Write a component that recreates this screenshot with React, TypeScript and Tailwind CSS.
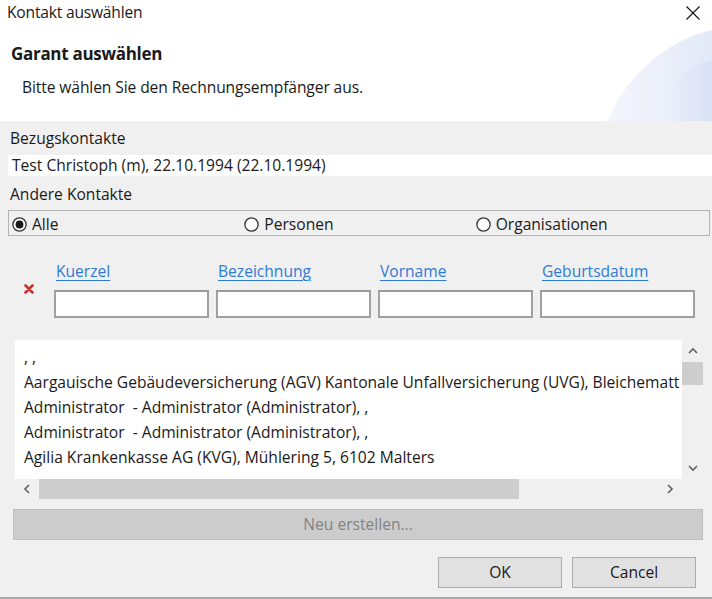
import React from "react";

const Radio = ({ checked, label }: { checked?: boolean; label: string }) => (
  <div className="flex items-center gap-[5px]">
    <svg width="15" height="15" viewBox="0 0 15 15">
      <circle cx="7.5" cy="7.5" r="6.6" fill="white" stroke="#333" strokeWidth="1.3" />
      {checked && <circle cx="7.5" cy="7.5" r="3.9" fill="#1a1a1a" />}
    </svg>
    <span>{label}</span>
  </div>
);

const Chevron = ({ dir }: { dir: "up" | "down" | "left" | "right" }) => {
  const paths: Record<string, string> = {
    up: "M1 6 L5 2 L9 6",
    down: "M1 2 L5 6 L9 2",
    left: "M6 1 L2 5 L6 9",
    right: "M2 1 L6 5 L2 9",
  };
  const vert = dir === "up" || dir === "down";
  return (
    <svg width={vert ? 10 : 8} height={vert ? 8 : 10} viewBox={vert ? "0 0 10 8" : "0 0 8 10"}>
      <path d={paths[dir]} fill="none" stroke="#606060" strokeWidth="1.6" />
    </svg>
  );
};

export default function App() {
  const filters = ["Kuerzel", "Bezeichnung", "Vorname", "Geburtsdatum"];
  const items = [
    ", ,",
    "Aargauische Gebäudeversicherung (AGV) Kantonale Unfallversicherung (UVG), Bleichematt",
    "Administrator  - Administrator (Administrator), ,",
    "Administrator  - Administrator (Administrator), ,",
    "Agilia Krankenkasse AG (KVG), Mühlering 5, 6102 Malters",
  ];
  return (
    <div className="w-[712px] h-[599px] overflow-hidden bg-[#f0f0f0] flex flex-col font-['Open_Sans',sans-serif] text-[15.6px] text-[#1a1a1a]">
      {/* Header (white) */}
      <div className="relative bg-white h-[121px] shrink-0">
        <svg className="absolute right-0 top-0" width="110" height="121" viewBox="0 0 110 121">
          <defs>
            <linearGradient id="g1" x1="0" y1="0" x2="1" y2="0">
              <stop offset="0" stopColor="#f4f6fc" />
              <stop offset="1" stopColor="#e3e9f8" />
            </linearGradient>
            <linearGradient id="g2" x1="0" y1="0" x2="1" y2="0">
              <stop offset="0" stopColor="#eef2fb" />
              <stop offset="1" stopColor="#d9e1f5" />
            </linearGradient>
          </defs>
          <path d="M5 121 C 25 75, 65 40, 110 30 L110 121 Z" fill="url(#g1)" />
          <path d="M52 121 C 60 90, 80 66, 110 60 L110 121 Z" fill="url(#g2)" />
        </svg>
        <div className="relative h-[26px] flex items-center justify-between pl-[7px] pr-[12px]">
          <span className="tracking-[-0.2px]">Kontakt auswählen</span>
          <svg width="14" height="14" viewBox="0 0 14 14">
            <path d="M0.5 0.5 L13.5 13.5 M13.5 0.5 L0.5 13.5" stroke="#111" strokeWidth="1.1" />
          </svg>
        </div>
        <div className="relative pl-[11px] pt-[17px] text-[17px] font-bold leading-[22px] tracking-[-0.3px]">
          Garant auswählen
        </div>
        <div className="relative pl-[22px] mt-[11px] leading-[22px] tracking-[-0.1px]">
          Bitte wählen Sie den Rechnungsempfänger aus.
        </div>
      </div>

      {/* Body */}
      <div className="flex flex-col pt-[7px] pl-[8px]">
        <div className="h-[20px] leading-[20px] pl-[2px]">Bezugskontakte</div>
        <div className="mt-[7px] h-[21px] bg-white leading-[21px] pl-[4px]">
          Test Christoph (m), 22.10.1994 (22.10.1994)
        </div>
        <div className="mt-[8px] h-[20px] leading-[20px] pl-[2px]">Andere Kontakte</div>
        <div className="mt-[6px] mr-[2px] h-[26px] pt-[2px] border border-[#b4b4b4] grid grid-cols-3 items-center">
          <div className="pl-[3px]">
            <Radio checked label="Alle" />
          </div>
          <div className="pl-[2px]">
            <Radio label="Personen" />
          </div>
          <div className="pl-[0px]">
            <Radio label="Organisationen" />
          </div>
        </div>

        {/* Filters */}
        <div className="mt-[25px] flex">
          <div className="w-[46px] flex flex-col">
            <div className="h-[20px]" />
            <div className="mt-[3px] h-[28px] pl-[16px]">
              <svg width="10" height="10" viewBox="0 0 10 10">
                <path d="M1.5 1.5 L8.5 8.5 M8.5 1.5 L1.5 8.5" stroke="#c9302c" strokeWidth="2.6" strokeLinecap="round" />
              </svg>
            </div>
          </div>
          <div className="flex gap-[7px]">
            {filters.map((f) => (
              <div key={f} className="w-[155px] flex flex-col">
                <div className="h-[20px] leading-[20px] pl-[2px]">
                  <span className="text-[#2e7bd6] underline decoration-[#2e7bd6] underline-offset-[3px]">{f}</span>
                </div>
                <div className="mt-[9px] h-[28px] bg-white border-2 border-[#a0a0a0] border-t-[#9a9a9a]" />
              </div>
            ))}
          </div>
        </div>
      </div>

      {/* List */}
      <div className="mt-[22px] ml-[15px] mr-[9px] flex flex-col">
        <div className="flex h-[139px]">
          <div className="flex-1 bg-white overflow-hidden pl-[9px] pt-[5px] pr-0">
            {items.map((t, i) => (
              <div key={i} className="h-[25px] leading-[25px] whitespace-pre">{t}</div>
            ))}
          </div>
          <div className="w-[21px] bg-[#f0f0f0] flex flex-col items-center">
            <div className="h-[22px] flex items-center justify-center">
              <Chevron dir="up" />
            </div>
            <div className="w-[21px] h-[23px] bg-[#cdcdcd]" />
            <div className="flex-1" />
            <div className="h-[22px] flex items-center justify-center">
              <Chevron dir="down" />
            </div>
          </div>
        </div>
        <div className="flex h-[20px] items-center mr-[21px]">
          <div className="w-[24px] flex items-center justify-center">
            <Chevron dir="left" />
          </div>
          <div className="w-[480px] h-[20px] bg-[#cdcdcd]" />
          <div className="flex-1" />
          <div className="w-[24px] flex items-center justify-center">
            <Chevron dir="right" />
          </div>
        </div>
      </div>

      {/* Neu erstellen */}
      <div className="mt-[10px] ml-[13px] mr-[9px] h-[31px] bg-[#cccccc] border border-[#bfbfbf] flex items-center justify-center text-[#838383]">
        Neu erstellen...
      </div>

      {/* OK / Cancel */}
      <div className="mt-[17px] flex justify-end gap-[10px] pr-[16px]">
        <div className="w-[124px] h-[31px] bg-[#e1e1e1] border border-[#adadad] flex items-center justify-center">
          OK
        </div>
        <div className="w-[124px] h-[31px] bg-[#e1e1e1] border border-[#adadad] flex items-center justify-center">
          Cancel
        </div>
      </div>
      <div className="flex-1" />
      <div className="h-[2px] bg-[#a9a9a9] mb-0" />
    </div>
  );
}
